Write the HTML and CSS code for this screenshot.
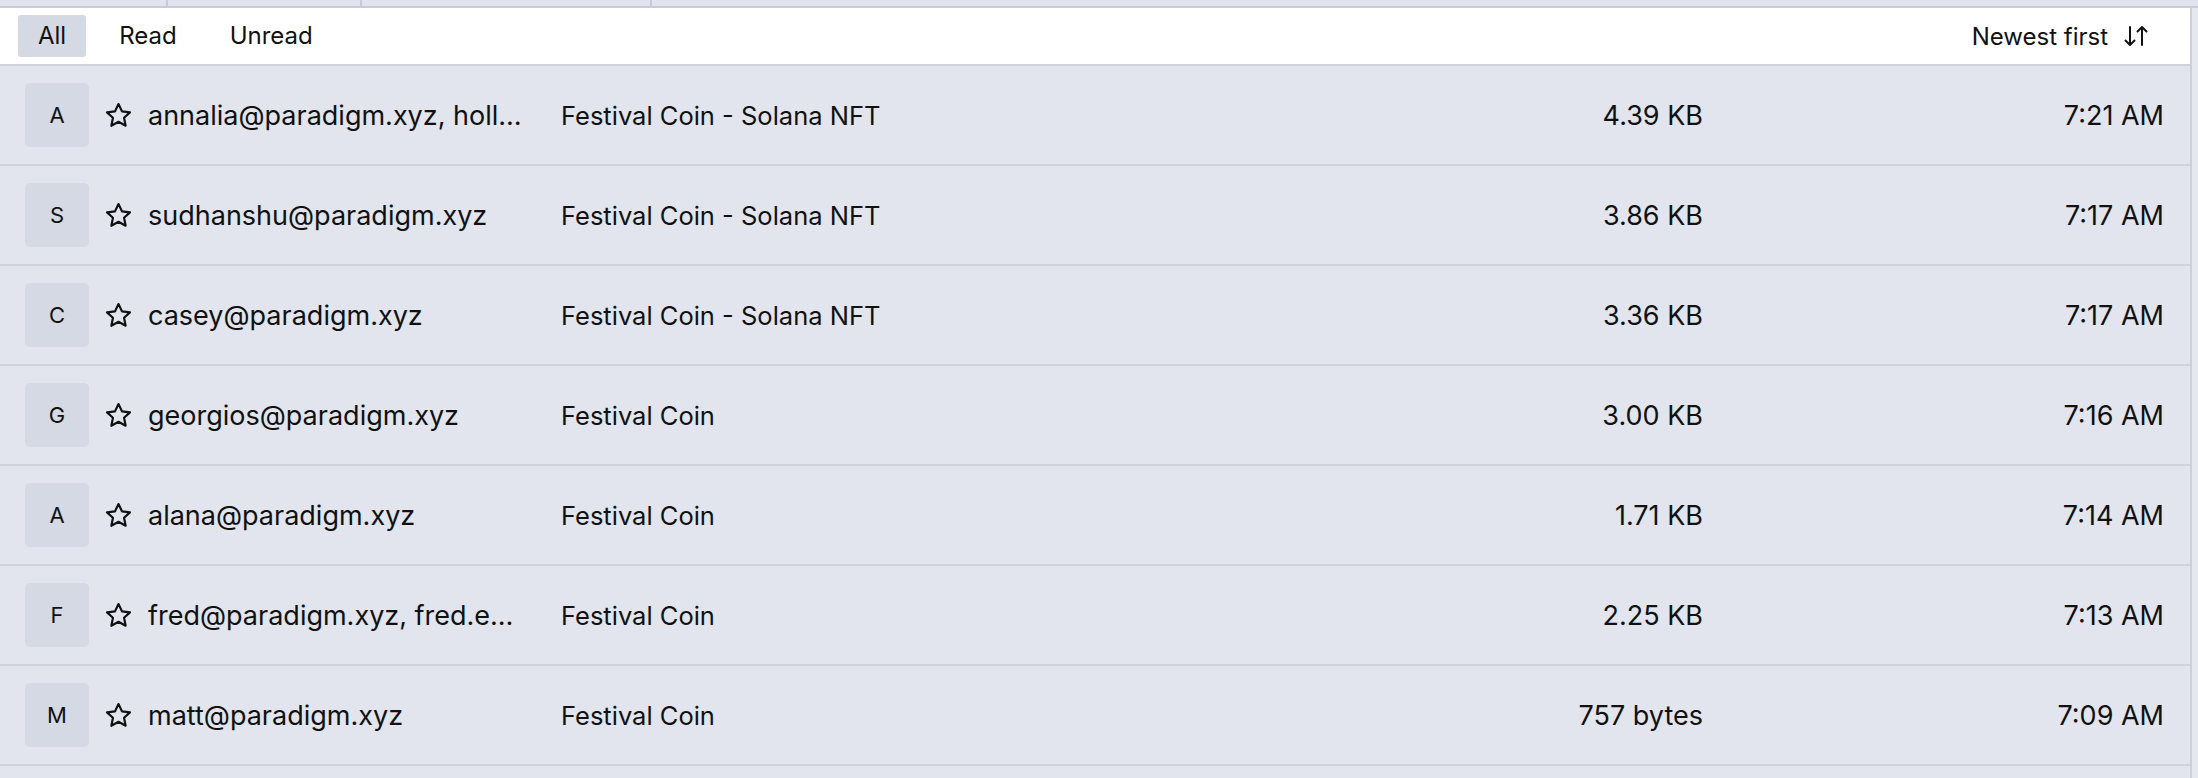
FILE: index.html
```html
<!DOCTYPE html>
<html lang="en">
<head>
<meta charset="utf-8">
<title>Inbox</title>
<link rel="stylesheet" href="styles.css">
</head>
<body>
<div class="topstrip">
  <div class="seg seg1"></div>
  <div class="seg seg2"></div>
  <div class="seg seg3"></div>
  <div class="seg seg4"></div>
</div>
<div class="frame">
  <main class="main">
    <div class="filterbar">
      <div class="tabs">
        <span class="tab active">All</span>
        <span class="tab">Read</span>
        <span class="tab">Unread</span>
      </div>
      <div class="sort">
        <span>Newest first</span>
        <svg class="sort-icon" viewBox="0 0 28 24" width="28" height="24" fill="none" stroke="#111" stroke-width="2" stroke-linecap="round" stroke-linejoin="round">
          <path d="M8 3v18M3.5 16.5L8 21l4.5-4.5"/>
          <path d="M20 21V3M15.5 7.5L20 3l4.5 4.5"/>
        </svg>
      </div>
    </div>
    <div class="list">
      <div class="row">
        <div class="avatar">A</div>
        <svg class="star" viewBox="0 0 24 24"><polygon points="12,2.5 14.9,8.6 21.5,9.4 16.6,13.9 17.9,20.5 12,17.2 6.1,20.5 7.4,13.9 2.5,9.4 9.1,8.6"/></svg>
        <div class="from">annalia@paradigm.xyz, hollis@paradigm.xyz</div>
        <div class="subject">Festival Coin - Solana NFT</div>
        <div class="size">4.39 KB</div>
        <div class="time">7:21 AM</div>
      </div>
      <div class="row">
        <div class="avatar">S</div>
        <svg class="star" viewBox="0 0 24 24"><polygon points="12,2.5 14.9,8.6 21.5,9.4 16.6,13.9 17.9,20.5 12,17.2 6.1,20.5 7.4,13.9 2.5,9.4 9.1,8.6"/></svg>
        <div class="from">sudhanshu@paradigm.xyz</div>
        <div class="subject">Festival Coin - Solana NFT</div>
        <div class="size">3.86 KB</div>
        <div class="time">7:17 AM</div>
      </div>
      <div class="row">
        <div class="avatar">C</div>
        <svg class="star" viewBox="0 0 24 24"><polygon points="12,2.5 14.9,8.6 21.5,9.4 16.6,13.9 17.9,20.5 12,17.2 6.1,20.5 7.4,13.9 2.5,9.4 9.1,8.6"/></svg>
        <div class="from">casey@paradigm.xyz</div>
        <div class="subject">Festival Coin - Solana NFT</div>
        <div class="size">3.36 KB</div>
        <div class="time">7:17 AM</div>
      </div>
      <div class="row">
        <div class="avatar">G</div>
        <svg class="star" viewBox="0 0 24 24"><polygon points="12,2.5 14.9,8.6 21.5,9.4 16.6,13.9 17.9,20.5 12,17.2 6.1,20.5 7.4,13.9 2.5,9.4 9.1,8.6"/></svg>
        <div class="from">georgios@paradigm.xyz</div>
        <div class="subject">Festival Coin</div>
        <div class="size">3.00 KB</div>
        <div class="time">7:16 AM</div>
      </div>
      <div class="row">
        <div class="avatar">A</div>
        <svg class="star" viewBox="0 0 24 24"><polygon points="12,2.5 14.9,8.6 21.5,9.4 16.6,13.9 17.9,20.5 12,17.2 6.1,20.5 7.4,13.9 2.5,9.4 9.1,8.6"/></svg>
        <div class="from">alana@paradigm.xyz</div>
        <div class="subject">Festival Coin</div>
        <div class="size">1.71 KB</div>
        <div class="time">7:14 AM</div>
      </div>
      <div class="row">
        <div class="avatar">F</div>
        <svg class="star" viewBox="0 0 24 24"><polygon points="12,2.5 14.9,8.6 21.5,9.4 16.6,13.9 17.9,20.5 12,17.2 6.1,20.5 7.4,13.9 2.5,9.4 9.1,8.6"/></svg>
        <div class="from">fred@paradigm.xyz, fred.ehrsam@gmail.com</div>
        <div class="subject">Festival Coin</div>
        <div class="size">2.25 KB</div>
        <div class="time">7:13 AM</div>
      </div>
      <div class="row">
        <div class="avatar">M</div>
        <svg class="star" viewBox="0 0 24 24"><polygon points="12,2.5 14.9,8.6 21.5,9.4 16.6,13.9 17.9,20.5 12,17.2 6.1,20.5 7.4,13.9 2.5,9.4 9.1,8.6"/></svg>
        <div class="from">matt@paradigm.xyz</div>
        <div class="subject">Festival Coin</div>
        <div class="size">757 bytes</div>
        <div class="time">7:09 AM</div>
      </div>
      <div class="row"></div>
    </div>
  </main>
  <div class="gutter"></div>
</div>
</body>
</html>
```

FILE: styles.css
```css
html, body {
  margin: 0;
  padding: 0;
  height: 778px;
  overflow: hidden;
  background: #e2e5ed;
  font-family: Inter, "Noto Sans", "Liberation Sans", sans-serif;
  color: #111;
}

.topstrip {
  display: flex;
  height: 6px;
  background: #e1e4ed;
  border-bottom: 2px solid #c9cbda;
}
.seg {
  height: 100%;
  border-right: 2px solid #c9cbda;
}
.seg1 { width: 166px; }
.seg2 { width: 192px; }
.seg3 { width: 288px; }
.seg4 { flex: 1; border-right: none; }

.frame {
  display: flex;
  height: 770px;
}

.main {
  flex: 1;
  min-width: 0;
  display: flex;
  flex-direction: column;
}

.gutter {
  width: 6px;
  background: #e6e8ef;
  border-left: 2px solid #cdd0db;
}

.filterbar {
  height: 56px;
  background: #fff;
  border-bottom: 2px solid #cfd2dd;
  display: flex;
  align-items: center;
  justify-content: space-between;
  padding: 0 40px 0 18px;
}

.tabs {
  display: flex;
  gap: 13px;
}
.tab {
  height: 42px;
  line-height: 42px;
  padding: 0 20px;
  font-size: 24px;
  border-radius: 3px;
  color: #111;
}
.tab.active {
  background: #d5d9e4;
}

.sort {
  display: flex;
  align-items: center;
  gap: 14px;
  font-size: 24px;
}
.sort-icon {
  display: block;
}

.list {
  flex: 1;
  overflow: hidden;
}

.row {
  height: 98px;
  border-bottom: 2px solid #d0d3de;
  background: #e2e5ed;
  display: flex;
  align-items: center;
  padding: 0 26px 0 25px;
}

.avatar {
  width: 64px;
  height: 64px;
  flex: none;
  border-radius: 5px;
  background: #d5d9e4;
  display: flex;
  align-items: center;
  justify-content: center;
  font-size: 22px;
  margin-right: 15px;
}

.star {
  width: 29px;
  height: 29px;
  flex: none;
  margin-right: 15px;
  fill: none;
  stroke: #111;
  stroke-width: 1.8;
  stroke-linejoin: round;
}

.from {
  width: 380px;
  flex: none;
  margin-right: 33px;
  font-size: 27px;
  white-space: nowrap;
  overflow: hidden;
  text-overflow: ellipsis;
}

.subject {
  flex: 1;
  min-width: 0;
  font-size: 25.5px;
  white-space: nowrap;
  overflow: hidden;
}

.size {
  width: 200px;
  flex: none;
  text-align: right;
  font-size: 27px;
}

.time {
  width: 461px;
  flex: none;
  text-align: right;
  font-size: 27px;
}
```
